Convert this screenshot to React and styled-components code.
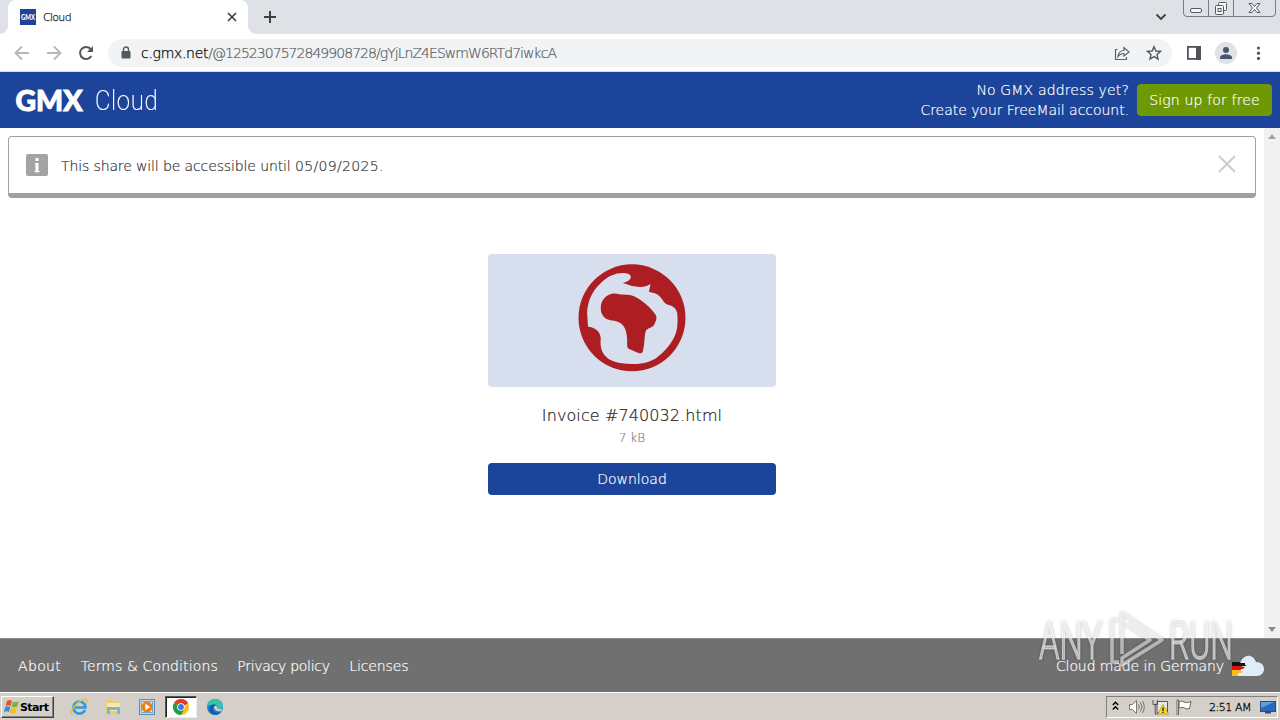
import React from 'react';
import styled, { createGlobalStyle, css } from 'styled-components';

const GlobalStyle = createGlobalStyle`
  * {
    box-sizing: border-box;
  }

  body {
    margin: 0;
    overflow: hidden;
    font-family: 'DejaVu Sans Light', 'DejaVu Sans', Verdana, sans-serif;
    font-weight: 200;
    font-size: 14px;
    -webkit-text-stroke: 0.2px;
  }

  svg {
    display: block;
    flex: none;
    -webkit-text-stroke: 0;
  }

  button {
    font: inherit;
    border: 0;
    padding: 0;
    background: none;
  }
`;

const Screen = styled.div`
  position: relative;
  display: flex;
  flex-direction: column;
  width: 1280px;
  height: 720px;
  background: #fff;
`;

/* Browser */

const TabStrip = styled.div`
  display: flex;
  height: 34px;
  padding-left: 8px;
  background: #dee1e6;
`;

const Tab = styled.div`
  position: relative;
  display: flex;
  align-items: center;
  width: 240px;
  padding: 0 10px 0 12px;
  background: #fff;
  border-radius: 8px 8px 0 0;

  &::before,
  &::after {
    content: '';
    position: absolute;
    bottom: 0;
    width: 8px;
    height: 8px;
  }

  &::before {
    left: -8px;
    background: radial-gradient(circle at 0 0, transparent 7.5px, #fff 8px);
  }

  &::after {
    right: -8px;
    background: radial-gradient(circle at 100% 0, transparent 7.5px, #fff 8px);
  }
`;

const TabTitle = styled.span`
  flex: 1;
  margin-left: 7px;
  font-size: 11px;
  letter-spacing: -0.7px;
  color: #222;
  -webkit-text-stroke: 0.25px;
`;

const NewTab = styled.div`
  display: flex;
  align-items: center;
  margin-left: 15px;
`;

const WindowTools = styled.div`
  display: flex;
  margin-left: auto;
  padding-right: 3px;
`;

const ChevronSlot = styled.div`
  display: flex;
  align-items: center;
  margin-right: 16px;
`;

const ToolBar = styled.div`
  display: flex;
  align-items: center;
  height: 38px;
  padding: 0 14px;
  background: #fff;
  border-bottom: 1px solid #d8dce2;
`;

const NavIcons = styled.div`
  display: flex;
  gap: 16px;
  width: 94px;
`;

const Omnibox = styled.div`
  display: flex;
  align-items: center;
  width: 1064px;
  height: 28px;
  padding: 0 10px 0 12px;
  background: #f1f3f4;
  border-radius: 14px;
`;

const Url = styled.span`
  flex: 1;
  margin-left: 9px;
  font-size: 14px;
  letter-spacing: -0.96px;
  color: #54585d;
  white-space: nowrap;
`;

const Host = styled.span`
  color: #000;
  letter-spacing: -0.3px;
  -webkit-text-stroke: 0.25px;
`;

const ToolIcons = styled.div`
  display: flex;
  align-items: center;
  gap: 14px;
`;

/* Page header */

const Header = styled.header`
  display: flex;
  align-items: center;
  height: 56px;
  padding: 0 8px 0 15px;
  background: #1c449b;
  color: #fff;
`;

const Product = styled.span`
  width: 70px;
  margin: 1px 0 0 10px;
  font-family: Roboto, sans-serif;
  font-weight: 200;
  font-size: 28.5px;
  line-height: 56px;
  letter-spacing: 0.7px;
  transform: scaleX(0.84);
  transform-origin: left;
`;

const Teaser = styled.div`
  margin: 0 8px 0 auto;
  line-height: 20px;
  text-align: right;
`;

const TeaserLine = styled.div`
  letter-spacing: ${(props) => props.$track}px;
`;

const buttonBase = css`
  height: 32px;
  border-radius: 4px;
  color: #fff;
  text-align: center;
`;

const SignUpButton = styled.button`
  ${buttonBase}
  width: 135px;
  background: #6e9804;
  letter-spacing: 0.17px;
`;

/* Page content */

const Content = styled.div`
  display: flex;
  height: 510px;
`;

const Page = styled.main`
  display: flex;
  flex-direction: column;
  align-items: center;
  flex: 1;
  padding: 8px;
`;

const Notice = styled.div`
  display: flex;
  align-items: center;
  width: 100%;
  height: 62px;
  padding: 0 18px 1px 17px;
  border: 1px solid #a0a0a0;
  border-bottom-width: 5px;
  border-radius: 4px;
  color: #333;
`;

const NoticeText = styled.span`
  flex: 1;
  margin: 2px 0 0 13px;
  letter-spacing: -0.12px;
`;

const NoticeDate = styled.span`
  letter-spacing: 0.35px;
`;

const CloseButton = styled.button`
  margin-bottom: 2px;
`;

const ShareCard = styled.section`
  display: flex;
  flex-direction: column;
  align-items: center;
  width: 288px;
  margin-top: 56px;
`;

const Preview = styled.div`
  display: flex;
  justify-content: center;
  width: 100%;
  height: 133px;
  padding-top: 10px;
  background: #d7deed;
  border-radius: 4px;
`;

const FileName = styled.div`
  margin-top: 19px;
  font-size: 16px;
  line-height: 20px;
  letter-spacing: 0.1px;
  color: #222;
`;

const FileSize = styled.div`
  margin-top: 4px;
  font-size: 12px;
  line-height: 16px;
  color: #808080;
`;

const DownloadButton = styled.button`
  ${buttonBase}
  width: 100%;
  margin-top: 17px;
  background: #1c449b;
`;

const ScrollBar = styled.div`
  display: flex;
  flex-direction: column;
  justify-content: space-between;
  align-items: center;
  width: 16px;
  padding: 6px 0;
  background: #f1f1f1;
`;

const Footer = styled.footer`
  display: flex;
  align-items: center;
  gap: 19.5px;
  height: 54px;
  padding: 0 16px 0 18px;
  border-top: 1px solid #8c8c8c;
  background: #707070;
  color: #fff;
`;

const FooterLink = styled.a`
  letter-spacing: ${(props) => props.$track || 0}px;
`;

const MadeIn = styled.div`
  display: flex;
  align-items: center;
  gap: 8px;
  margin-left: auto;
  letter-spacing: -0.1px;
`;

/* Taskbar */

const TaskBar = styled.div`
  display: flex;
  align-items: center;
  height: 28px;
  padding: 1px 0 0 1px;
  background: #d4cfc8;
  border-top: 1px solid #fff;
`;

const StartButton = styled.button`
  display: flex;
  align-items: center;
  gap: 0;
  width: 53px;
  height: 22px;
  padding-left: 2px;
  border: 1px solid;
  border-color: #fff #404040 #404040 #fff;
  box-shadow: inset -1px -1px 0 #87837d;
  font-family: 'DejaVu Sans', sans-serif;
  font-size: 11px;
  font-weight: 700;
  letter-spacing: -0.6px;
  color: #000;
  -webkit-text-stroke: 0;
`;

const Launcher = styled.div`
  display: flex;
  align-items: center;
  justify-content: center;
  width: 32px;
  height: 22px;
  margin-left: 2px;
  ${(props) =>
    props.$active &&
    css`
      background: #fff;
      border: 1px solid;
      border-color: #555 #eee #eee #555;
      box-shadow: inset 1px 1px 0 #222;
    `}
`;

const Launchers = styled.div`
  display: flex;
  margin-left: 7px;
`;

const Tray = styled.div`
  display: flex;
  align-items: center;
  width: 172px;
  height: 22px;
  margin: 0 2px 0 auto;
  padding-left: 5px;
  border: 1px solid;
  border-color: #808080 #fff #fff #808080;
`;

const TrayItem = styled.div`
  margin-right: ${(props) => props.$gap}px;
`;

const Clock = styled.span`
  width: 51px;
  font-size: 11px;
  letter-spacing: -0.45px;
  color: #000;
  white-space: nowrap;
  -webkit-text-stroke: 0.3px;
`;

const Watermark = styled.svg`
  position: absolute;
  left: 1034px;
  top: 604px;
  filter: drop-shadow(0 0 1.5px rgba(0, 0, 0, 0.4));
`;

const Favicon = () => (
  <svg width="16" height="16" viewBox="0 0 16 16">
    <rect width="16" height="16" fill="#1c449b" />
    <text x="1" y="10.5" textLength="14" lengthAdjust="spacingAndGlyphs" fontFamily="Lato" fontWeight="900" fontSize="7" fill="#fff">
      GMX
    </text>
  </svg>
);

const GmxLogo = () => (
  <svg width="70" height="40" viewBox="0 0 70 40">
    <text
      x="0.5"
      y="30.500"
      textLength="67"
      lengthAdjust="spacingAndGlyphs"
      fontFamily="Lato"
      fontWeight="900"
      fontSize="29"
      fill="#fff"
      stroke="#fff"
      strokeWidth="1"
    >
      GMX
    </text>
  </svg>
);

const WindowButtons = () => (
  <svg width="94" height="17" viewBox="0 0 94 17" fill="none" stroke="#777b82">
    <path d="M.5 0V13Q.5 16.500 4 16.500H89Q92.500 16.500 92.500 13V0M25.500 0V16M50.500 0V16" />
    <g stroke="#555a62" fill="#f5f6f8">
      <rect x="7.500" y="8.500" width="11" height="4" rx="1.500" />
      <rect x="35.500" y="2.500" width="8" height="8" rx="1" />
      <rect x="32.500" y="5.500" width="8" height="9" rx="1" />
      <rect x="35" y="8.500" width="3" height="3" />
      <path d="M66 3.500h3l2.500 3 2.500-3h3l-3.500 4.500 3.500 4.500h-3l-2.500-3-2.500 3h-3l3.500-4.500z" />
    </g>
  </svg>
);

const NavArrow = ({ flip }) => (
  <svg width="16" height="16" viewBox="0 0 16 16" fill="none" stroke="#b4b6b9" strokeWidth="1.800">
    <path d={flip ? 'M1 8H14M8 1.500 14.500 8 8 14.500' : 'M15 8H2M8 1.500 1.500 8 8 14.500'} />
  </svg>
);

const Globe = () => (
  <svg width="108" height="108" viewBox="295 57 323 323">
    <circle cx="456.500" cy="218" r="160" fill="#ad1e22" />
    <path
      fill="#d7deed"
      d="M430 84C405 84 384 94 364 113C332 142 320 180 323 215L325 245C344 246 362 258 363 280C361 301 364 317 374 329C390 349 414 354 455 356C489 357 513 350 533 335C551 321 568 303 580 281C593 258 594 236 592 205C589 187 576 181 562 178C551 174 547 160 537 152C528 143 517 143 507 140L512 117L500 123C476 131 450 121 429 114C441 110 453 105 453 95C451 87 441 84 430 84Z"
    />
    <path
      fill="#ad1e22"
      d="M397 146C408 143 419 149 438 149C455 147 466 154 480 163C500 178 514 190 526 207C533 216 529 226 522 240C516 248 502 248 498 257C493 273 495 295 489 318C487 325 480 326 472 322L450 312C440 307 442 299 442 284C441 255 433 237 414 230C399 224 384 227 374 217C364 207 361 194 364 178C368 162 382 148 397 146Z"
    />
  </svg>
);

const CloudFlag = () => (
  <svg width="32" height="22" viewBox="0 0 32 22">
    <path d="M5 21C1 21 0 18 0 14 0 9 4 8 8 8 10 3 14 0 18 1c4 1 5 4 6 6 5 0 8 3 8 7 0 4-3 7-7 7z" fill="#e0edf8" />
    <path d="M0 7H9l-2 1h6v2h2l-2 1H0z" fill="#111" />
    <path d="M0 11h12l-3 1h4l-2 2H9v1H0z" fill="#d51318" />
    <path d="M0 15h9l-1 1h3l-2 2H6v3H0z" fill="#f8bd16" />
  </svg>
);

const WindowsFlag = () => (
  <svg width="16" height="16" viewBox="0 0 16 16">
    <path d="M3 2c2-1.500 3.500-1 5 0L6.500 7C5 6 3.500 6 1.500 7z" fill="#e8532a" />
    <path d="M9 2.500c2 1 4 1 6-.5l-1.500 5C11.500 8.500 9.500 8.500 7.500 7.500z" fill="#75b63c" />
    <path d="M1.200 8c2-1 3.500-1 5 0L5 13c-1.500-1-3-1-5 0z" fill="#398be0" />
    <path d="M7.200 8.500c2 1 4 1 6 0l-1.500 5c-2 1.200-4 1.200-6 0z" fill="#f4bd27" />
  </svg>
);

const ExplorerE = () => (
  <svg width="18" height="18" viewBox="0 0 18 18" fill="none">
    <path d="M15 12A6 6 0 1 1 15.500 9.500H5" stroke="#2f9bdc" strokeWidth="2.600" />
    <path d="M2.500 16.500C-2 15 6 5 12 2c5-2 5.500 0 4 3.500" stroke="#e8bc3c" strokeWidth="1.400" />
  </svg>
);

const Folder = () => (
  <svg width="18" height="18" viewBox="0 0 18 18">
    <path d="M2 2h6l1 2h6v11H2z" fill="#e9cd70" />
    <path d="M3 5h13v8H3z" fill="#f7e9a8" />
    <path d="M3 9h13v7h-3v-4H6v4H3z" fill="#79b5d6" />
  </svg>
);

const MediaPlayer = () => (
  <svg width="16" height="16" viewBox="0 0 16 16">
    <rect x=".5" y=".5" width="15" height="15" fill="#b9d7ed" stroke="#5791bd" />
    <rect x="2.500" y="2.500" width="11" height="11" fill="#e6f1f7" stroke="#7aa9cc" />
    <circle cx="8" cy="8" r="5.500" fill="#ef7d16" />
    <path d="M6.300 4.800 11.300 8l-5 3.200z" fill="#fff" />
  </svg>
);

const ChromeIcon = () => (
  <svg width="16" height="16" viewBox="0 0 16 16">
    <circle cx="8" cy="8" r="8" fill="#fbc116" />
    <path d="M8 8 1.070 4A8 8 0 0 1 14.930 4z" fill="#e33b2e" />
    <path d="M8 8 1.070 4A8 8 0 0 0 8 16l3.460-6z" fill="#1e9e4a" />
    <path d="M8 4.300h6.930L8 8z" fill="#e33b2e" />
    <circle cx="8" cy="8" r="3.800" fill="#fff" />
    <circle cx="8" cy="8" r="2.900" fill="#3478e6" />
  </svg>
);

const EdgeIcon = () => (
  <svg width="16" height="16" viewBox="0 0 16 16">
    <circle cx="8" cy="8" r="8" fill="#1683d3" />
    <path d="M0 7C1 2 4 0 8 0c5 0 8 3 8 6.500 0 3-4 4.500-6 3.500 1-2 0-4.500-3-4.500C4 5.500 1 6 0 8z" fill="#39c1ae" />
    <path d="M6.500 8c-2 5 3 7 7.500 5-3 4-9 3.500-11 0C1.500 10 3 6 7 5.500c2 0 3 1.500 3 2.500z" fill="#155aa7" />
    <path d="M7 8c0-2 3-1.500 3 0 0 2 2 3 5.500 1.500L14 12c-4 1-7-1-7-4z" fill="#d4cfc8" />
  </svg>
);

const App = () => {
  return (
    <>
      <GlobalStyle />
      <Screen>
        <TabStrip>
          <Tab>
            <Favicon />
            <TabTitle>Cloud</TabTitle>
            <svg width="12" height="12" viewBox="0 0 12 12" stroke="#3c4043" strokeWidth="1.700">
              <path d="M2 2l8 8M10 2l-8 8" />
            </svg>
          </Tab>
          <NewTab>
            <svg width="14" height="14" viewBox="0 0 14 14" stroke="#3c4043" strokeWidth="2">
              <path d="M1 7h12M7 1v12" />
            </svg>
          </NewTab>
          <WindowTools>
            <ChevronSlot>
              <svg width="12" height="8" viewBox="0 0 12 8" fill="none" stroke="#3c4043" strokeWidth="1.800">
                <path d="M1.500 1.500 6 6l4.500-4.500" />
              </svg>
            </ChevronSlot>
            <WindowButtons />
          </WindowTools>
        </TabStrip>

        <ToolBar>
          <NavIcons>
            <NavArrow />
            <NavArrow flip />
            <svg width="16" height="16" viewBox="0 0 16 16" fill="none" stroke="#55585d" strokeWidth="2">
              <path d="M13.300 11A6 6 0 1 1 12.600 4" />
              <path d="M15 1v6H9z" fill="#55585d" stroke="none" />
            </svg>
          </NavIcons>
          <Omnibox>
            <svg width="12" height="14" viewBox="0 0 12 14">
              <rect x="1.500" y="5" width="9" height="7.500" rx="1" fill="#55585d" />
              <path d="M3.500 6V3.500a2.500 2.500 0 0 1 5 0V6" fill="none" stroke="#55585d" strokeWidth="1.400" />
            </svg>
            <Url>
              <Host>c.gmx.net</Host>/@1252307572849908728/gYjLnZ4ESwmW6RTd7iwkcA
            </Url>
            <ToolIcons>
              <svg width="18" height="16" viewBox="0 0 18 16" fill="none" stroke="#5f6368" strokeWidth="1.200">
                <path d="M3.500 4.500h-2v10h11V12" />
                <path d="M4 11.500c.5-4 3-6 6-6V2.500L15 7l-5 4V8.500c-2.500 0-4.500 1-6 3z" />
              </svg>
              <svg width="16" height="16" viewBox="0 0 16 16" fill="none" stroke="#55585d" strokeWidth="1.400">
                <path d="M8 1.800 9.900 6l4.600.4L11 9.400l1 4.600-4-2.400L4 14l1-4.600L1.500 6.400 6.100 6z" />
              </svg>
            </ToolIcons>
          </Omnibox>
          <svg width="94" height="24" viewBox="0 0 94 24">
            <rect x="15.900" y="5.900" width="12" height="12" fill="none" stroke="#50545a" strokeWidth="1.800" />
            <path d="M24 5h5v14h-5z" fill="#50545a" />
            <circle cx="54" cy="12" r="11" fill="#dfe3e8" />
            <circle cx="54" cy="9" r="3" fill="#48566f" />
            <path d="M48 18v-1.500c0-2 4-3.200 6-3.200s6 1.200 6 3.200V18z" fill="#48566f" />
            <g fill="#50545a">
              <circle cx="86.500" cy="7" r="1.600" />
              <circle cx="86.500" cy="12.200" r="1.600" />
              <circle cx="86.500" cy="17.400" r="1.600" />
            </g>
          </svg>
        </ToolBar>

        <Header>
          <GmxLogo />
          <Product>Cloud</Product>
          <Teaser>
            <TeaserLine $track={0.15}>No GMX address yet?</TeaserLine>
            <TeaserLine $track={-0.04}>Create your FreeMail account.</TeaserLine>
          </Teaser>
          <SignUpButton>Sign up for free</SignUpButton>
        </Header>

        <Content>
          <Page>
            <Notice>
              <svg width="22" height="22" viewBox="0 0 22 22">
                <rect width="22" height="22" rx="2" fill="#a3a3a3" />
                <path d="M9.500 4h3v3h-3zM9 9h3.500v8H13.500v1.200H8.500V17h1V10.500H9z" fill="#fff" />
              </svg>
              <NoticeText>
                This share will be accessible until <NoticeDate>05/09/2025.</NoticeDate>
              </NoticeText>
              <CloseButton>
                <svg width="20" height="20" viewBox="0 0 20 20" stroke="#ccc" strokeWidth="2">
                  <path d="M2 2l16 16M18 2 2 18" />
                </svg>
              </CloseButton>
            </Notice>
            <ShareCard>
              <Preview>
                <Globe />
              </Preview>
              <FileName>Invoice #740032.html</FileName>
              <FileSize>7 kB</FileSize>
              <DownloadButton>Download</DownloadButton>
            </ShareCard>
          </Page>
          <ScrollBar>
            <svg width="8" height="5" viewBox="0 0 8 5" fill="#a3a3a3">
              <path d="M0 5 4 0l4 5z" />
            </svg>
            <svg width="8" height="5" viewBox="0 0 8 5" fill="#8c8c8c">
              <path d="M0 0h8L4 5z" />
            </svg>
          </ScrollBar>
        </Content>

        <Footer>
          <FooterLink $track={0.35}>About</FooterLink>
          <FooterLink $track={0.11}>Terms &amp; Conditions</FooterLink>
          <FooterLink $track={-0.28}>Privacy policy</FooterLink>
          <FooterLink $track={-0.1}>Licenses</FooterLink>
          <MadeIn>
            Cloud made in Germany
            <CloudFlag />
          </MadeIn>
        </Footer>

        <TaskBar>
          <StartButton>
            <WindowsFlag />
            Start
          </StartButton>
          <Launchers>
            <Launcher>
              <ExplorerE />
            </Launcher>
            <Launcher>
              <Folder />
            </Launcher>
            <Launcher>
              <MediaPlayer />
            </Launcher>
            <Launcher $active>
              <ChromeIcon />
            </Launcher>
            <Launcher>
              <EdgeIcon />
            </Launcher>
          </Launchers>
          <Tray>
            <TrayItem $gap={9}>
              <svg width="7" height="12" viewBox="0 0 7 12" fill="none" stroke="#000" strokeWidth="1.400">
                <path d="M.8 4 3.500 1.200 6.200 4M.8 8.500 3.500 5.700 6.200 8.500" />
              </svg>
            </TrayItem>
            <TrayItem $gap={7}>
              <svg width="17" height="16" viewBox="0 0 17 16" fill="none" stroke="#777">
                <path d="M1.500 5.500h3l4-4v13l-4-4h-3z" fill="#fff" />
                <path d="M10.500 5.500q1.500 2.500 0 5M12.500 3.500q3 4.500 0 9M14.500 2q3.500 6 0 12" />
              </svg>
            </TrayItem>
            <TrayItem $gap={7}>
              <svg width="17" height="16" viewBox="0 0 17 16">
                <path d="M5 2.500h10.500v11H5z" fill="#e8e8e8" stroke="#555" />
                <path d="M1 1v4.500h4.500V1M3.200 6v9H6" fill="none" stroke="#555" />
                <path d="M11 5.500 16.500 15h-11z" fill="#ffda17" stroke="#a88900" strokeWidth=".6" />
                <path d="M10.300 8.500h1.400v3.500h-1.400zM10.300 12.700h1.400V14h-1.400z" fill="#222" />
              </svg>
            </TrayItem>
            <TrayItem $gap={16}>
              <svg width="17" height="16" viewBox="0 0 17 16" stroke="#666">
                <path d="M3 2.500q3-1 5 .5 3 1.500 7-.5l-1.500 7q-3 1-5-.5t-5.500 0z" fill="#fff" />
                <path d="M1 1h1.500v14.500H1z" fill="#fff" />
              </svg>
            </TrayItem>
            <Clock>2:51 AM</Clock>
            <svg width="16" height="14" viewBox="0 0 16 14">
              <rect x=".5" y="1.500" width="15" height="10" fill="#2769bd" stroke="#294e83" />
              <path d="M1 2h13L1 8z" fill="#5ea0df" />
              <path d="M5 12h6v1.500H5z" fill="#394b65" />
            </svg>
          </Tray>
        </TaskBar>

        <Watermark width="210" height="80" viewBox="0 0 210 80">
          <g
            fill="#fff"
            fillOpacity="0.5"
            stroke="#fff"
            strokeOpacity="0.5"
            fontFamily="Roboto"
            fontWeight="300"
            fontSize="51"
            strokeWidth="1.600"
          >
            <text x="5" y="55" textLength="63" lengthAdjust="spacingAndGlyphs">
              ANY
            </text>
            <text x="135" y="55" textLength="64" lengthAdjust="spacingAndGlyphs">
              RUN
            </text>
          </g>
          <g fill="none" stroke="#fff" strokeOpacity="0.55" strokeWidth="3.500" strokeLinejoin="round">
            <path d="M84 16h-6v42h7M88 50V9l40 27-40 25V54l28-18-24-16" />
          </g>
        </Watermark>
      </Screen>
    </>
  );
};

export default App;
